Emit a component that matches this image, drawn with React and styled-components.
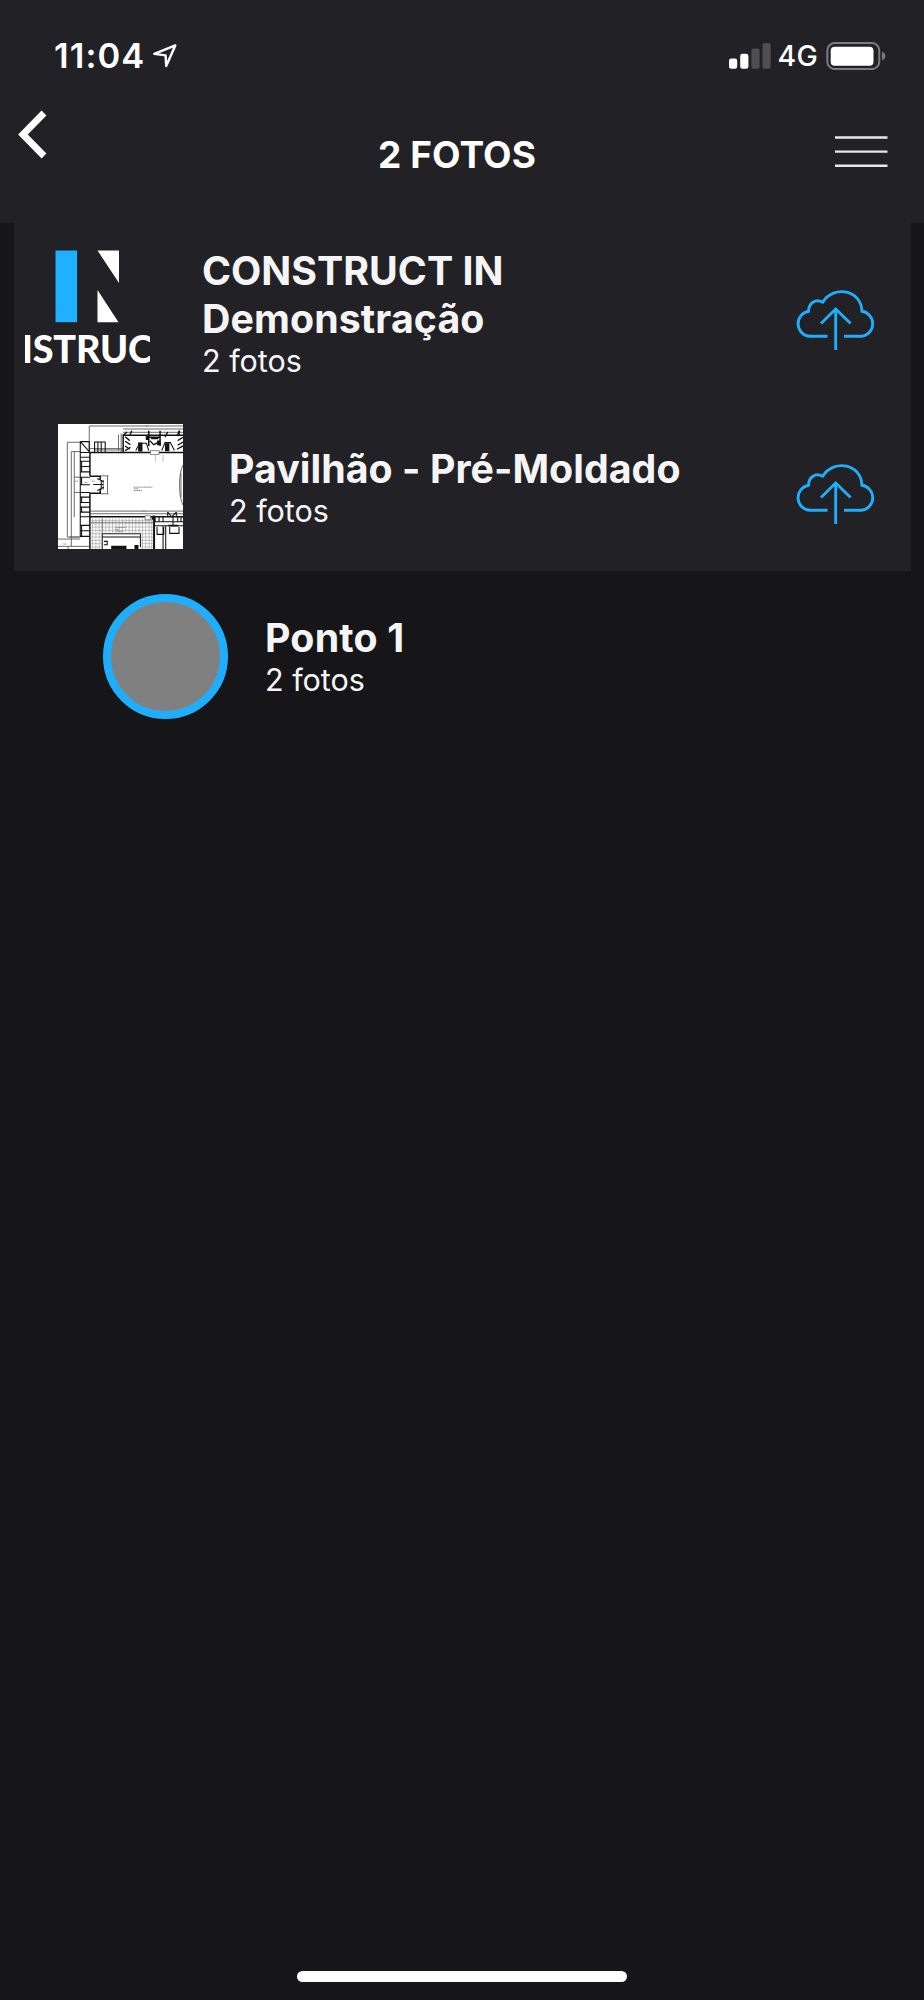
import React from "react";
import styled, { createGlobalStyle } from "styled-components";

const GlobalStyle = createGlobalStyle`
  *, *::before, *::after { box-sizing: border-box; }
  body { margin: 0; background: #161618; }
  svg { display: block; flex: none; }
`;

const Screen = styled.div`
  width: 924px;
  height: 2000px;
  display: flex;
  flex-direction: column;
  background: #161618;
  color: #f5f5f5;
  font-family: Inter, "Liberation Sans", sans-serif;
  overflow: hidden;
`;

const Header = styled.header`
  flex: none;
  height: 223px;
  background: #222126;
  color: #fff;
`;

const StatusBar = styled.div`
  display: flex;
  justify-content: space-between;
  align-items: center;
  height: 111px;
  padding: 0 38px 0 54px;
`;

const StatusGroup = styled.div`
  display: flex;
  align-items: center;
`;

const Clock = styled.span`
  font-size: 34.5px;
  line-height: 42px;
  font-weight: 600;
  letter-spacing: 1.1px;
  margin-right: 7px;
`;

const Network = styled.span`
  font-size: 28.5px;
  line-height: 34px;
  font-weight: 450;
  letter-spacing: 0.2px;
  margin: 0 8px 0 7px;
`;

const NavBar = styled.nav`
  display: grid;
  grid-template-columns: 100px 1fr 110px;
  align-items: start;
  height: 112px;
`;

const IconButton = styled.button`
  display: flex;
  border: 0;
  background: none;
  padding: ${(p) => p.$pad};
  color: inherit;
`;

const NavTitle = styled.h1`
  margin: 0;
  padding-top: 21px;
  text-align: center;
  font-size: 37px;
  line-height: 46px;
  font-weight: 700;
  letter-spacing: 0.1px;
`;

const List = styled.main`
  flex: 1;
  padding: 0 13.5px 0 13.5px;
`;

const Row = styled.div`
  display: flex;
  align-items: center;
  height: ${(p) => p.$height}px;
  padding: ${(p) => p.$top}px 35px 0 ${(p) => p.$indent}px;
  background: ${(p) => (p.$raised ? "#222126" : "transparent")};
`;

const Thumb = styled.div`
  flex: none;
  width: 125px;
  height: 125px;
  overflow: hidden;
`;

const Texts = styled.div`
  flex: 1;
  padding-top: 1px;
  margin-left: ${(p) => p.$gap}px;
`;

const Title = styled.div`
  font-size: 39.3px;
  line-height: 48px;
  font-weight: 700;
  letter-spacing: ${(p) => p.$tracking || 0}px;
  white-space: nowrap;
`;

const Count = styled.div`
  margin: -1px 0 1px;
  font-size: 30.5px;
  line-height: 37px;
  font-weight: 400;
  letter-spacing: 0;
`;

const UploadButton = styled.button`
  border: 0;
  padding: 14px 0 0;
  background: none;
  color: #1eaefc;
`;

const PointCircle = styled.div`
  width: 125px;
  height: 125px;
  border-radius: 50%;
  border: 8px solid #1eaefc;
  background: #808080;
`;

const Footer = styled.footer`
  display: flex;
  justify-content: center;
  height: 30px;
`;

const HomeIndicator = styled.div`
  width: 330px;
  height: 11px;
  border-radius: 6px;
  background: #fff;
  margin-top: 1px;
`;

const LocationArrow = () => (
  <svg width="26" height="26" viewBox="151 43 26 26" fill="none" stroke="#fff" strokeWidth="2.4" strokeLinejoin="round">
    <path d="M174.3 45.4 153.3 53.9 164.6 55.4 165.2 66Z" />
  </svg>
);

const Signal = () => (
  <svg width="42" height="26" viewBox="728.5 42.5 42 26">
    <rect x="728.5" y="58" width="8.2" height="10.3" rx="2.2" fill="#fff" />
    <rect x="739.7" y="53.3" width="8.2" height="15" rx="2.2" fill="#fff" />
    <rect x="750.9" y="48" width="8.2" height="20.3" rx="2.2" fill="#4f4f52" />
    <rect x="762" y="42.5" width="8.2" height="25.8" rx="2.2" fill="#4f4f52" />
  </svg>
);

const Battery = () => (
  <svg width="60" height="28" viewBox="826.5 41.3 60 28">
    <rect x="827.8" y="42.4" width="52" height="26" rx="7.5" fill="none" stroke="#7c7c80" strokeWidth="2" />
    <rect x="831.2" y="46" width="42.8" height="19" rx="4" fill="#fff" />
    <path d="M882.5 51c4.6 1.6 4.6 7 0 8.6z" fill="#7c7c80" />
  </svg>
);

const BackIcon = () => (
  <svg width="30" height="50" viewBox="18 111 30 50" overflow="visible" fill="none" stroke="#fff" strokeWidth="6.8">
    <path d="M44 113 22.9 134.5 44 156" />
  </svg>
);

const MenuIcon = () => (
  <svg width="53" height="32" viewBox="835.5 136 53 32" stroke="#e8e8ea" strokeWidth="2.4">
    <path d="M835.5 137.5h52.5M835.5 151.6h52.5M835.5 165.7h52.5" />
  </svg>
);

const CloudUpload = () => (
  <svg width="80" height="62" viewBox="0 0 80 62" fill="none" stroke="currentColor" strokeWidth="2.9">
    <path d="M31.5 47.3H14A12.6 12.6 0 0 1 12.5 22.3C12.6 14 19.5 9.3 26.7 13.2C38-4.5 65.5 1 65.9 22.3A12.6 12.6 0 0 1 65.5 47.3H48" />
    <path d="M39.7 61V20M25 34.5 39.7 20 54.6 34.5" />
  </svg>
);

const Logo = () => (
  <svg width="125" height="125" viewBox="25 250 125 125">
    <rect x="55.5" y="250.5" width="21.6" height="71.7" fill="#1fb0ff" />
    <path d="M97.5 250.5h21.5v32.5zM97.5 290v32.2h21z" fill="#fff" />
    <text x="21.5" y="363.2" fontFamily="Lato, sans-serif" fontWeight="900" fontSize="37.8" textLength="131.500" fill="#fff">
      ISTRUC
    </text>
  </svg>
);

const FloorPlan = () => (
  <svg width="125" height="125" viewBox="54 42 376 376" fill="none" stroke="#111" strokeWidth="3">
    <rect x="54" y="42" width="376" height="376" fill="#fff" stroke="none" />
    <g stroke="#555" strokeWidth="2.6">
      <path d="M148 48H430M148 48V126M82 97H122M82 97V382H122M94 125V410M103 125V322M94 125H122M88 382H118M54 388H120M54 410H148M84 410V418" />
      <path d="M250 57H430M250 67H430M236 74V122M244 70V126" />
      <path d="M103 202H121M103 248H121M203 198V252M182 198H206M182 252H206M190 210V240" />
      <path d="M152 304H430M152 312H430M148 116H250M165 120H250" />
      <path d="M430 166C416 190 416 260 430 286M424 190V262" />
      <path d="M347 134V156M370 134V156" stroke="#bbb" />
    </g>
    <g strokeWidth="4.5">
      <path d="M150 128H430M150 128V198M150 250V418M150 199H181V210M150 250H181V238M150 321H430" />
      <path d="M343 318V418" strokeWidth="6" />
      <path d="M248 76H430M250 76V126M327 62V108M361 62V108M327 82H361M418 62V76" />
    </g>
    <g strokeWidth="3.2">
      <path d="M121 95V382M148 95V128M121 95H148M121 95 148 125M121 128H150M121 142H150M121 154H150M121 170H150M121 186H150M121 202H150M121 225H150M121 248H150M121 262H150M121 278H150M121 292H150M121 307H150M121 321H150M121 347H150M121 363H150M121 380H150M125 154V186M125 202V225M125 262V278M125 292V307M125 347V380" />
      <path d="M164 126V96H196V126M174 96V126M184 96V126M160 224H190M172 206 192 216M172 242 192 232M184 212V240" />
      <path d="M256 80 270 92M256 94 272 104M256 108 270 118M256 122 272 112M276 62 270 76M330 92 342 104 358 96M334 86H356M384 66 376 82M420 62 412 78M430 82 414 92M430 96 414 106M430 108 412 118M262 66 250 76" strokeWidth="4" />
      <path d="M288 122 300 100H320L327 122M366 122 376 98H392L404 122" />
      <path d="M346 322V336H430M344 348H430M352 352V374H372V352M370 348V418M378 348V418M390 352V371H418V352M400 322V348M358 322V336M370 322V336M384 307 396 321 410 307M384 307V321M410 307V321M414 322V336M424 322V336" />
      <path d="M187 418V372H302V412M187 382H302M192 395H202V405H192" />
    </g>
    <g stroke="#9a9a9a" strokeWidth="1.8">
      <path d="M158 326V418M168 326V418M178 326V418M188 326V372M198 326V372M208 326V372M218 326V372M228 326V372M238 326V372M248 326V372M258 326V372M268 326V372M278 326V372M288 326V372M298 326V372M308 326V418M318 326V418M328 326V418M336 326V418" />
      <path d="M152 332H340M152 342H340M152 352H340M152 362H340M152 372H187M302 372H340M152 382H187M302 382H340M152 392H187M302 392H340M152 402H187M302 402H340M152 412H187M302 412H340" />
    </g>
    <path d="M152 338H340M187 326V372" stroke="#555" strokeWidth="2" />
    <g fill="#111" stroke="none">
      <path d="M295 98h13v27h-13zM376 100h13v24h-13zM318 78h10v12h-10zM352 92h10v14h-10zM214 408h46v10h-46zM284 406h12v12h-12zM336 318h10v12h-10zM386 345h30v5h-30z" />
    </g>
    <path d="M332 122H358V134H332zM316 318H332V330H316z" fill="#fff" stroke="#555" strokeWidth="2" />
    <path d="M282 232h56M282 237h14M282 242h24M228 353h30M226 359h12M228 365h22M70 403h8M318 48h8M308 304h8M106 214h8M134 218h8M156 214h8" stroke="#777" strokeWidth="2.5" strokeDasharray="4 1" />
  </svg>
);

const rows = [
  {
    lines: [["CONSTRUCT IN", 0], ["Demonstração", 0.1]],
    count: "2 fotos", art: <Logo />, height: 174, top: 5, indent: 11.5, gap: 52, raised: true,
  },
  {
    lines: [["Pavilhão - Pré-Moldado", 0.05]],
    count: "2 fotos", art: <FloorPlan />, height: 174, top: 5, indent: 44.5, gap: 46, raised: true,
  },
  {
    lines: [["Ponto 1", 0.2]],
    count: "2 fotos", art: <PointCircle />, height: 170, top: 0, indent: 89.5, gap: 37, raised: false,
  },
];

export default function App() {
  return (
    <Screen>
      <GlobalStyle />
      <Header>
        <StatusBar>
          <StatusGroup>
            <Clock>11:04</Clock>
            <LocationArrow />
          </StatusGroup>
          <StatusGroup>
            <Signal />
            <Network>4G</Network>
            <Battery />
          </StatusGroup>
        </StatusBar>
        <NavBar>
          <IconButton $pad="0 0 0 18px" aria-label="Voltar"><BackIcon /></IconButton>
          <NavTitle>2 FOTOS</NavTitle>
          <IconButton $pad="25px 0 0 21px" aria-label="Menu"><MenuIcon /></IconButton>
        </NavBar>
      </Header>
      <List>
        {rows.map((row) => (
          <Row key={row.lines[0][0]} $height={row.height} $top={row.top} $indent={row.indent} $raised={row.raised}>
            <Thumb>{row.art}</Thumb>
            <Texts $gap={row.gap}>
              {row.lines.map(([text, tracking]) => (
                <Title key={text} $tracking={tracking}>{text}</Title>
              ))}
              <Count>{row.count}</Count>
            </Texts>
            {row.raised && <UploadButton aria-label="Enviar"><CloudUpload /></UploadButton>}
          </Row>
        ))}
      </List>
      <Footer><HomeIndicator /></Footer>
    </Screen>
  );
}
